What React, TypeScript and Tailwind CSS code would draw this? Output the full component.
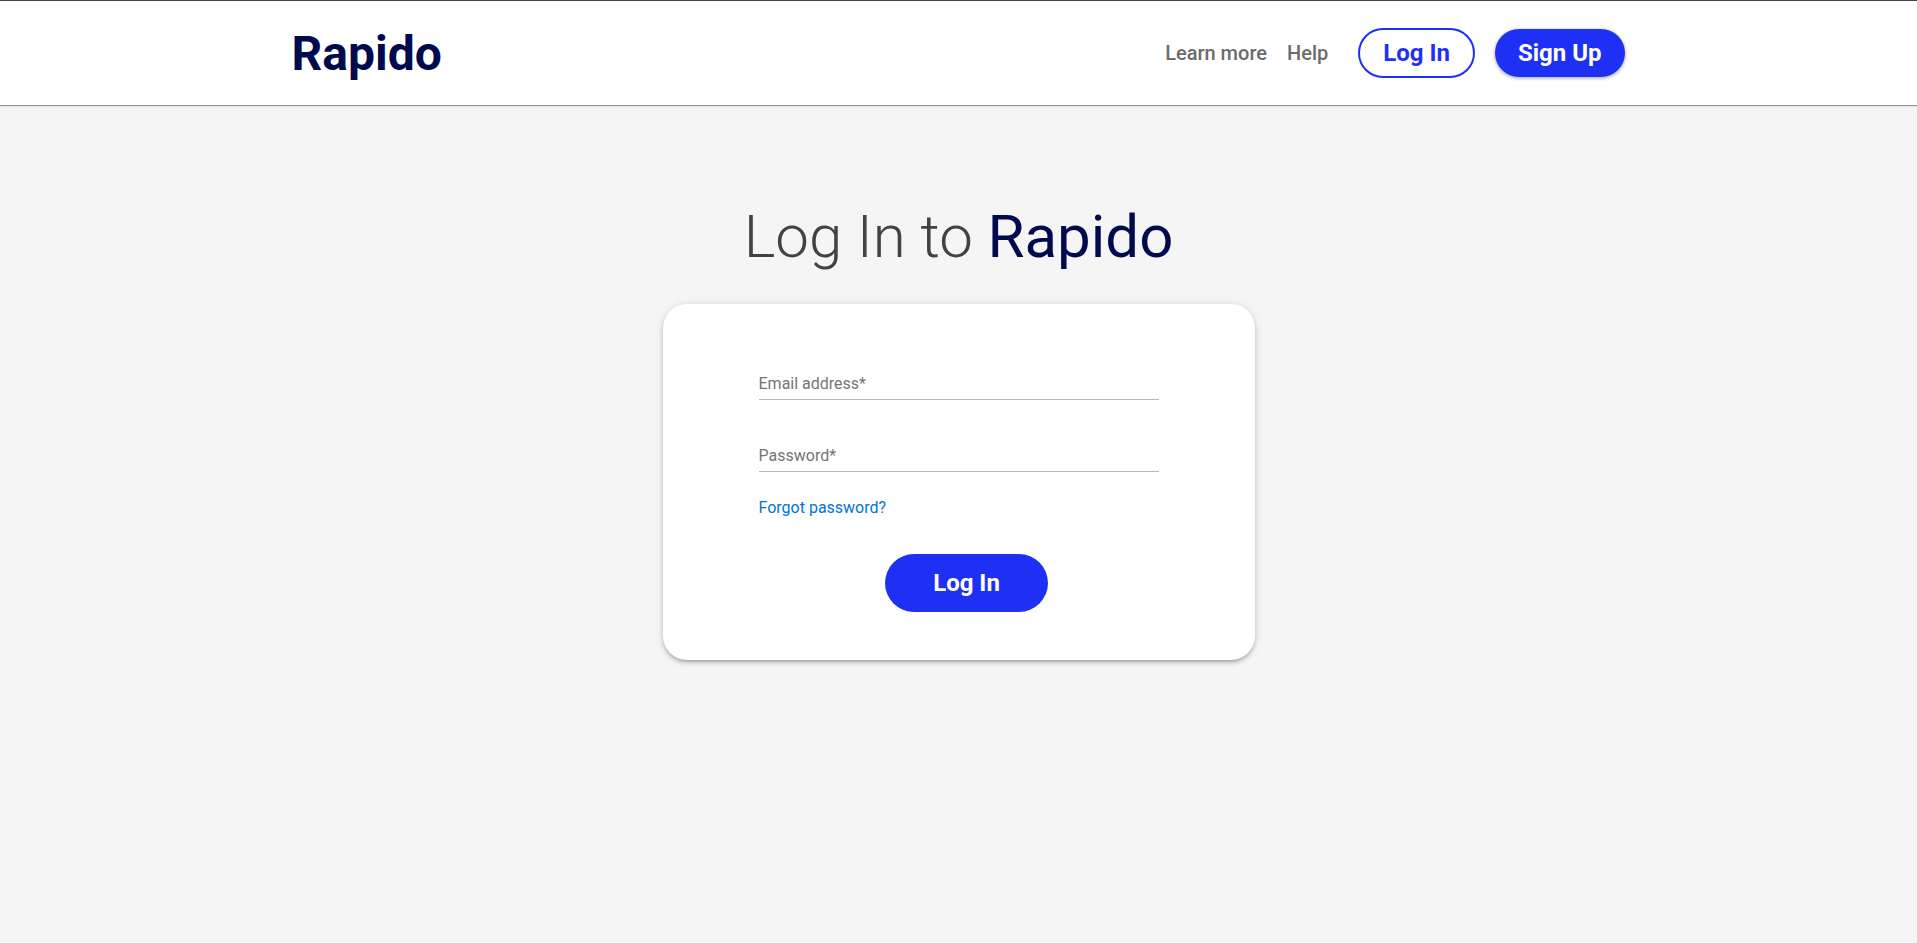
const pill = 'flex items-center justify-center rounded-full text-2xl leading-7 font-bold';

function Header() {
  return (
    <header className="relative border-t border-[#424242] bg-white shadow-[0_1px_1px_0_#999999]">
      <div className="mx-auto flex h-[104px] max-w-[1334px] items-center justify-between">
        <a href="#home" className="pt-px text-5xl leading-14 font-bold text-[#000a4d]">
          Rapido
        </a>
        <nav className="flex items-center gap-5 pr-px">
          <a href="#learn-more" className="text-xl font-medium text-[#6b6b6b]">
            Learn more
          </a>
          <a href="#help" className="mr-[10px] text-xl font-medium text-[#6b6b6b]">
            Help
          </a>
          <a
            href="#login"
            className={`${pill} h-[50px] border-2 border-[#1f30f5] px-[23px] text-[#1f30f5]`}
          >
            Log In
          </a>
          <a
            href="#signup"
            className={`${pill} h-12 bg-[#1f30f5] px-[23px] text-white shadow-[0_1px_3px_1px_rgba(0,0,0,0.25)]`}
          >
            Sign Up
          </a>
        </nav>
      </div>
    </header>
  );
}

function Field({ id, type, label }: { id: string; type: string; label: string }) {
  return (
    <div className="relative">
      <input
        id={id}
        type={type}
        required
        placeholder=" "
        className="peer block h-8 w-full border-b border-[#b8b8b8] bg-transparent text-base text-[#424242] outline-none"
      />
      <label
        htmlFor={id}
        className="pointer-events-none absolute top-1 left-0 origin-top-left text-base text-[#757575] transition-all peer-focus:-top-4 peer-focus:text-xs peer-[:not(:placeholder-shown)]:-top-4 peer-[:not(:placeholder-shown)]:text-xs"
      >
        {label}*
      </label>
    </div>
  );
}

export default function App() {
  return (
    <div className="flex min-h-screen flex-col bg-[#f5f5f5] font-['Roboto',sans-serif]">
      <Header />
      <main className="flex flex-col items-center px-4 pt-24">
        <h1 className="text-6xl leading-[72px] font-light text-[#424242]">
          Log In to <span className="font-normal text-[#000a4d]">Rapido</span>
        </h1>
        <form
          onSubmit={(e) => e.preventDefault()}
          className="mt-[31px] flex w-full max-w-[592px] flex-col rounded-3xl bg-white px-24 pt-16 pb-12 shadow-[0_3px_3px_-2px_rgba(0,0,0,0.2),0_3px_4px_0_rgba(0,0,0,0.14),0_1px_8px_0_rgba(0,0,0,0.12)]"
        >
          <div className="flex flex-col gap-10">
            <Field id="email" type="email" label="Email address" />
            <Field id="password" type="password" label="Password" />
          </div>
          <a href="#forgot" className="mt-6 self-start text-base text-[#0073dc]">
            Forgot password?
          </a>
          <button type="submit" className={`${pill} mt-[34px] ml-4 h-[58px] self-center bg-[#1f30f5] px-12 text-white`}>
            Log In
          </button>
        </form>
      </main>
    </div>
  );
}
